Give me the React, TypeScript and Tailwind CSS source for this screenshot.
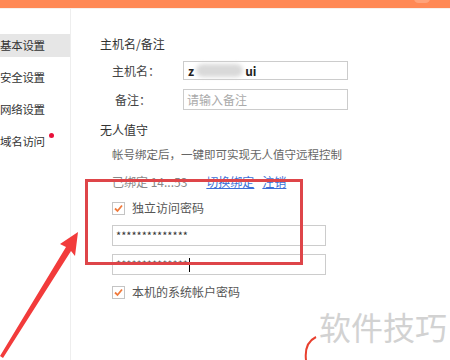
import React from 'react';

const font = { fontFamily: '"Microsoft YaHei", "Noto Sans CJK SC", "Liberation Sans", sans-serif' };

const CheckBox: React.FC = () => (
  <span className="inline-flex h-[13px] w-[13px] items-center justify-center border border-[#c4c4c4] bg-white">
    <svg width="11" height="11" viewBox="0 0 11 11">
      <polyline points="2,5.5 4.5,8 9,2.5" fill="none" stroke="#f07a3c" strokeWidth="1.8" />
    </svg>
  </span>
);

const menu = [
  { label: '基本设置', active: true },
  { label: '安全设置' },
  { label: '网络设置' },
  { label: '域名访问', dot: true },
];

export default function App() {
  return (
    <div className="relative h-[360px] w-[450px] overflow-hidden bg-white text-[12px]" style={font}>
      <div className="relative h-[8px] bg-[#ff8955]">
        <div className="absolute right-[20px] top-[-6px] h-[9px] w-[16px] rounded-full bg-[#ffa37a]" />
      </div>
      <div className="h-[1px] bg-[#f6f1ec]" />

      <div className="flex h-[351px]">
        {/* sidebar */}
        <div className="w-[71px] border-r border-[#eeeeee] pt-[25px]">
          {menu.map((m, i) => (
            <div
              key={m.label}
              className={`relative flex h-[23px] items-center text-[#333] ${i > 0 ? 'mt-[9px]' : ''} ${m.active ? 'bg-[#e6e6e6]' : ''}`}
            >
              <span className="text-[11.5px] tracking-[-0.3px]">{m.label}</span>
              {m.dot && <span className="absolute left-[49px] top-[3px] h-[5px] w-[5px] rounded-full bg-[#e8103a]" />}
            </div>
          ))}
        </div>

        {/* main */}
        <div className="flex-1 pl-[29px] pt-[25px] text-[#333]">
          <div className="flex h-[20px] items-center">主机名/备注</div>

          <div className="mt-[7px] flex h-[19px] items-center">
            <span className="w-[83px] pl-[12px] text-[#444]">主机名：</span>
            <div className="flex h-[19px] w-[165px] items-center border border-[#cccccc] pl-[4px] text-[12px] font-semibold text-[#222]">
              <span>z</span>
              <span className="ml-[2px] inline-block h-[13px] w-[47px] rounded-full bg-[#d9d9d9] blur-[2px]" />
              <span className="ml-[2px]">ui</span>
            </div>
          </div>

          <div className="mt-[9px] flex h-[21px] items-center">
            <span className="w-[83px] pl-[15px] text-[#444]">备注：</span>
            <div className="flex h-[21px] w-[165px] items-center border border-[#cccccc] pl-[3px] text-[#aaaaaa]">
              请输入备注
            </div>
          </div>

          <div className="mt-[10px] flex h-[20px] items-center">无人值守</div>

          <div className="mt-[5px] flex h-[20px] items-center pl-[12px] text-[11.5px] text-[#666]">
            帐号绑定后，一键即可实现无人值守远程控制
          </div>

          <div className="mt-[7px] flex h-[20px] items-center pl-[12px] text-[#888]">
            <span>已绑定 14...53</span>
            <span className="ml-[19px] text-[#3c6fd8] underline">切换绑定</span>
            <span className="ml-[8px] text-[#3c6fd8] underline">注销</span>
          </div>

          <div className="mt-[6px] flex h-[20px] items-center pl-[12px] text-[#555]">
            <CheckBox />
            <span className="ml-[7px]">独立访问密码</span>
          </div>

          <div className="ml-[12px] mt-[7px] flex h-[21px] w-[214px] items-center border border-[#cccccc] pl-[3px] text-[11px] text-[#333]">
            **************
          </div>

          <div className="ml-[12px] mt-[8px] flex h-[21px] w-[214px] items-center border border-[#cccccc] pl-[3px] text-[11px] text-[#333]">
            <span>**************</span>
            <span className="ml-[1px] inline-block h-[14px] w-[1px] bg-black" />
          </div>

          <div className="mt-[7px] flex h-[20px] items-center pl-[12px] text-[#555]">
            <CheckBox />
            <span className="ml-[7px]">本机的系统帐户密码</span>
          </div>
        </div>
      </div>

      {/* annotations */}
      <div className="pointer-events-none absolute left-[85px] top-[179px] h-[86px] w-[218px] border-[3px] border-[#de4549]" />

      <svg className="pointer-events-none absolute left-0 top-0" width="450" height="360" viewBox="0 0 450 360">
        <polygon points="78,232 60,244 66,247 0,356 3,358 71,251 75,256" fill="#f23b3b" />
        <path d="M316,337 Q304,343 306,360" fill="none" stroke="#e8402f" strokeWidth="2" />
      </svg>

      <div className="pointer-events-none absolute left-[319px] top-[306px] text-[32px] leading-[40px] text-[#d2d2d2]">
        软件技巧
      </div>
    </div>
  );
}
